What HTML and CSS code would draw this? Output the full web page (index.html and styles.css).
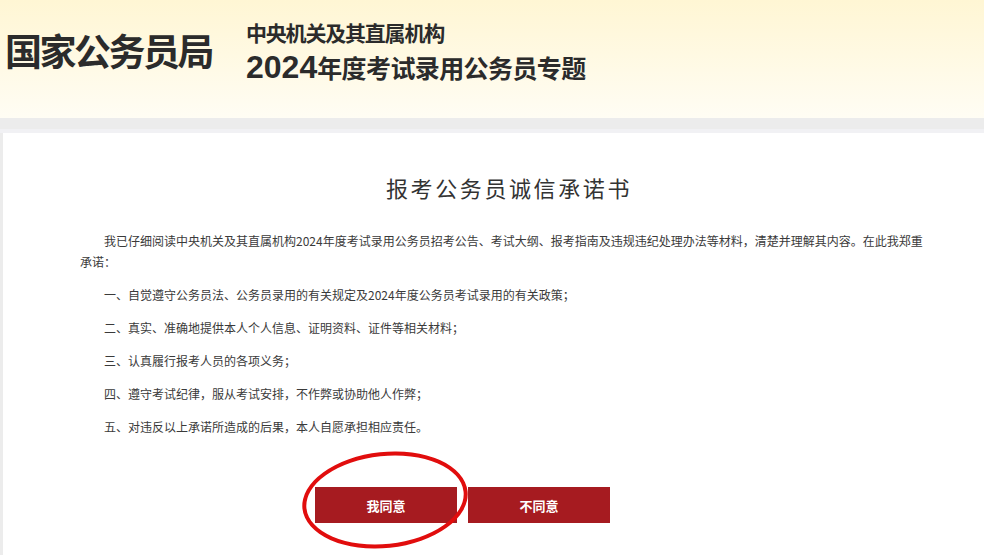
FILE: index.html
```html
<!DOCTYPE html>
<html lang="zh-CN">
<head>
  <meta charset="UTF-8" />
  <meta name="viewport" content="width=device-width, initial-scale=1.0" />
  <title>报考公务员诚信承诺书</title>
  <link rel="stylesheet" href="styles.css">
</head>
<body>
  <header class="topbar">
    <div class="logo">国家公务员局</div>
    <div class="subject">
      <div class="subject-top">中央机关及其直属机构</div>
      <div class="subject-main"><span class="year">2024</span>年度考试录用公务员专题</div>
    </div>
  </header>

  <div class="band"></div>

  <div class="page">
    <div class="card">
      <h2 class="title">报考公务员诚信承诺书</h2>

      <div class="pledge">
        <p>我已仔细阅读中央机关及其直属机构2024年度考试录用公务员招考公告、考试大纲、报考指南及违规违纪处理办法等材料，清楚并理解其内容。在此我郑重承诺：</p>
        <p>一、自觉遵守公务员法、公务员录用的有关规定及2024年度公务员考试录用的有关政策；</p>
        <p>二、真实、准确地提供本人个人信息、证明资料、证件等相关材料；</p>
        <p>三、认真履行报考人员的各项义务；</p>
        <p>四、遵守考试纪律，服从考试安排，不作弊或协助他人作弊；</p>
        <p>五、对违反以上承诺所造成的后果，本人自愿承担相应责任。</p>
      </div>

      <div class="actions">
        <div class="btn-wrap">
          <button class="btn">我同意</button>
          <span class="circle"></span>
        </div>
        <button class="btn">不同意</button>
      </div>
    </div>
  </div>
</body>
</html>
```

FILE: styles.css
```css
body {
  margin: 0;
  font-family: "Noto Sans CJK SC", "Noto Sans", sans-serif;
  color: #333;
  background: #ececec;
}

.topbar {
  height: 118px;
  display: flex;
  align-items: flex-start;
  background: linear-gradient(to bottom, #fff6d4 0%, #fff9e2 45%, #fffdf4 100%);
}

.logo {
  margin: 24px 0 0 5px;
  font-size: 37px;
  font-weight: bold;
  letter-spacing: -2.5px;
  line-height: 52px;
  color: #2b2b2b;
}

.subject {
  margin: 21px 0 0 34px;
  color: #2b2b2b;
  font-weight: bold;
}

.subject-top {
  font-size: 21px;
  letter-spacing: -1.2px;
  line-height: 22px;
}

.subject-main {
  margin-top: 6px;
  font-size: 25px;
  letter-spacing: -0.6px;
  line-height: 36px;
}

.subject-main .year {
  font-family: "Liberation Sans", Arial, sans-serif;
  font-size: 32px;
  letter-spacing: 0;
  line-height: 1;
}

.band {
  height: 11px;
  background: #ececec;
  border-bottom: 4px solid #f1f1f4;
}

.page {
  padding-left: 3px;
  background: #ececec;
}

.card {
  background: #fff;
  height: 422px;
  padding: 39px 54px 0 77px;
  box-sizing: border-box;
}

.title {
  margin: 0;
  padding-left: 8px;
  text-align: center;
  font-size: 22px;
  font-weight: normal;
  line-height: 30px;
  letter-spacing: 2.6px;
  color: #333;
}

.pledge {
  margin-top: 28px;
  font-size: 12px;
  line-height: 21px;
  color: #3a3a3a;
}

.pledge p {
  margin: 0 0 12px;
  text-indent: 2em;
}

.actions {
  display: flex;
  gap: 11px;
  margin-top: 50px;
  padding-left: 235px;
}

.btn-wrap {
  position: relative;
}

.btn {
  width: 142px;
  height: 36px;
  border: none;
  background: #a61b20;
  color: #fff;
  font-family: "Noto Sans CJK SC", sans-serif;
  font-size: 13px;
  font-weight: bold;
  cursor: pointer;
}

.circle {
  position: absolute;
  left: -13px;
  top: -35px;
  width: 158px;
  height: 88px;
  border: 4px solid #e10d0d;
  border-radius: 50%;
  transform: rotate(-6deg);
  pointer-events: none;
}
```
